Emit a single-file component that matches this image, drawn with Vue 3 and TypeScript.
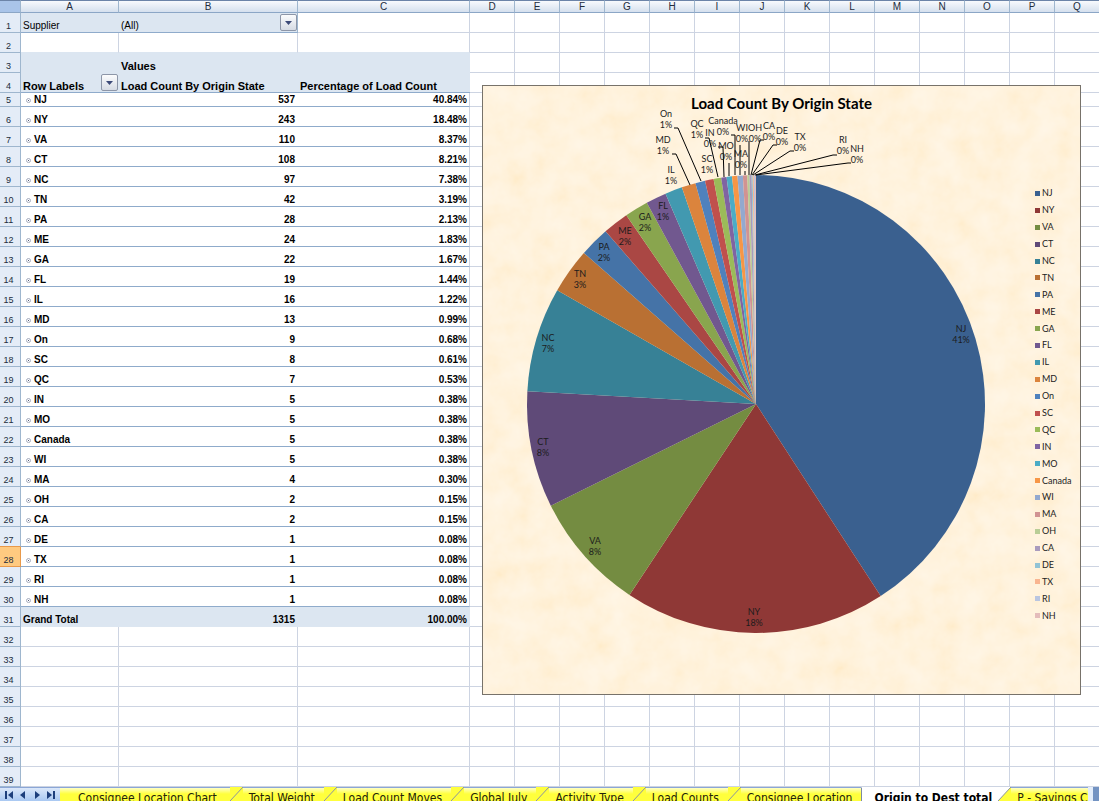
<script setup lang="ts">
interface State {
  name: string
  count: number
  color: string
  x: number
  y: number
  leader?: string
}

const states: State[] = [
  { name: 'NJ', count: 537, color: '#3a608f', x: 478, y: 218 },
  { name: 'NY', count: 243, color: '#8f3836', x: 271, y: 501 },
  { name: 'VA', count: 110, color: '#748c41', x: 112, y: 430 },
  { name: 'CT', count: 108, color: '#5f4a78', x: 60, y: 331 },
  { name: 'NC', count: 97, color: '#378196', x: 65, y: 227 },
  { name: 'TN', count: 42, color: '#b97033', x: 97, y: 163 },
  { name: 'PA', count: 28, color: '#4573a7', x: 121, y: 136 },
  { name: 'ME', count: 24, color: '#aa4744', x: 142, y: 120 },
  { name: 'GA', count: 22, color: '#89a54e', x: 162, y: 106 },
  { name: 'FL', count: 19, color: '#71588f', x: 180, y: 95 },
  { name: 'IL', count: 16, color: '#4299b0', x: 188, y: 59 },
  { name: 'MD', count: 13, color: '#db843d', x: 180, y: 29, leader: '189,40 193,40 207,71' },
  { name: 'On', count: 9, color: '#4f81bd', x: 183, y: 3, leader: '191,14 195,14 218,67' },
  { name: 'SC', count: 8, color: '#c0504d', x: 224, y: 48 },
  { name: 'QC', count: 7, color: '#9bbb59', x: 214, y: 13, leader: '222,24 226,24 235,63' },
  { name: 'IN', count: 5, color: '#8064a2', x: 227, y: 22, leader: '235,33 240,33 241,63' },
  { name: 'MO', count: 5, color: '#4bacc6', x: 243, y: 35, leader: '246,49 246,62' },
  { name: 'Canada', count: 5, color: '#f79646', x: 240, y: 10, leader: '248,21 252,21 252,61' },
  { name: 'WI', count: 5, color: '#93a9cf', x: 259, y: 17, leader: '257,31 257,61' },
  { name: 'MA', count: 4, color: '#d19392', x: 258, y: 43, leader: '262,57 262,61' },
  { name: 'OH', count: 2, color: '#b9cd96', x: 272, y: 17, leader: '266,27 266,61' },
  { name: 'CA', count: 2, color: '#a99bbd', x: 286, y: 15, leader: '281,26 277,26 268,61' },
  { name: 'DE', count: 1, color: '#91c3d5', x: 299, y: 20, leader: '294,31 290,31 269,61' },
  { name: 'TX', count: 1, color: '#f9b590', x: 317, y: 26, leader: '311,37 307,37 270,61' },
  { name: 'RI', count: 1, color: '#b9c5e0', x: 360, y: 29, leader: '354,41 350,41 272,61' },
  { name: 'NH', count: 1, color: '#e4bcbb', x: 374, y: 38, leader: '368,49 365,49 273,61' },
]

const total = states.reduce((sum, s) => sum + s.count, 0)
const percent = (n: number, digits: number) => ((n / total) * 100).toFixed(digits) + '%'

const cx = 273
const cy = 290
const radius = 229
const point = (n: number) => {
  const a = (n / total) * Math.PI * 2
  return `${cx + radius * Math.sin(a)} ${cy - radius * Math.cos(a)}`
}
let running = 0
const slices = states.map((s) => {
  const start = running
  running += s.count
  return {
    ...s,
    path: `M${cx} ${cy} L${point(start)} A${radius} ${radius} 0 0 1 ${point(running)} Z`,
  }
})

const otherColumns = 'DEFGHIJKLMNOPQ'.split('')
const lastRows = [32, 33, 34, 35, 36, 37, 38, 39]
const selectedRow = 28

const tabs = [
  'Consignee Location Chart',
  'Total Weight',
  'Load Count Moves',
  'Global July',
  'Activity Type',
  'Load Counts',
  'Consignee Location',
  'Origin to Dest total',
  'P - Savings Chart',
]
const activeTab = 'Origin to Dest total'
const navs = [
  { label: 'First sheet', d: 'M1 1h2v8H1zM9 1v8L4 5z' },
  { label: 'Previous sheet', d: 'M7 1v8L2 5z' },
  { label: 'Next sheet', d: 'M3 1v8l5-4z' },
  { label: 'Last sheet', d: 'M1 1v8l5-4zM7 1h2v8H7z' },
]
</script>

<template>
  <main class="workbook">
    <div class="sheet">
      <table class="cells">
        <colgroup>
          <col class="w-head" />
          <col class="w-a" />
          <col class="w-b" />
          <col class="w-c" />
          <col v-for="c in otherColumns" :key="c" />
        </colgroup>
        <thead>
          <tr>
            <th class="corner"></th>
            <th>A</th>
            <th>B</th>
            <th>C</th>
            <th v-for="c in otherColumns" :key="c">{{ c }}</th>
          </tr>
        </thead>
        <tbody>
          <tr>
            <th>1</th>
            <td class="fill ruled plain">Supplier</td>
            <td class="fill ruled plain edge">
              <div class="with-button">
                <span>(All)</span>
                <button class="drop" aria-label="Filter supplier">
                  <svg width="7" height="4" viewBox="0 0 7 4"><path d="M0 0h7L3.5 4z" fill="#3c4a78" /></svg>
                </button>
              </div>
            </td>
            <td></td>
            <td v-for="c in otherColumns" :key="c"></td>
          </tr>
          <tr>
            <th>2</th>
            <td class="open"></td>
            <td class="open"></td>
            <td class="open"></td>
            <td v-for="c in otherColumns" :key="c"></td>
          </tr>
          <tr>
            <th>3</th>
            <td class="fill"></td>
            <td class="fill title">Values</td>
            <td class="fill"></td>
            <td v-for="c in otherColumns" :key="c"></td>
          </tr>
          <tr>
            <th>4</th>
            <td class="fill ruled title">
              <div class="with-button">
                <span>Row Labels</span>
                <button class="drop" aria-label="Filter row labels">
                  <svg width="7" height="4" viewBox="0 0 7 4"><path d="M0 0h7L3.5 4z" fill="#3c4a78" /></svg>
                </button>
              </div>
            </td>
            <td class="fill ruled title">Load Count By Origin State</td>
            <td class="fill ruled title">Percentage of Load Count</td>
            <td v-for="c in otherColumns" :key="c"></td>
          </tr>
          <tr v-for="(s, i) in states" :key="s.name" :class="{ short: i === 0 }">
            <th :class="{ selected: i + 5 === selectedRow, above: i + 6 === selectedRow }">{{ i + 5 }}</th>
            <td class="ruled bare">
              <div class="item">
                <button class="expand" :aria-label="'Expand ' + s.name">
                  <svg width="5" height="5" viewBox="0 0 5 5">
                    <circle cx="2.5" cy="2.5" r="2" fill="#fff" stroke="#a4abbd" />
                    <path d="M2 2h1v1H2z" fill="#59627c" />
                  </svg>
                </button>
                <span>{{ s.name }}</span>
              </div>
            </td>
            <td class="ruled bare number">{{ s.count }}</td>
            <td class="ruled number">{{ percent(s.count, 2) }}</td>
            <td v-for="c in otherColumns" :key="c"></td>
          </tr>
          <tr>
            <th>31</th>
            <td class="fill">Grand Total</td>
            <td class="fill number">{{ total }}</td>
            <td class="fill number">100.00%</td>
            <td v-for="c in otherColumns" :key="c"></td>
          </tr>
          <tr v-for="r in lastRows" :key="r">
            <th>{{ r }}</th>
            <td></td>
            <td></td>
            <td></td>
            <td v-for="c in otherColumns" :key="c"></td>
          </tr>
        </tbody>
      </table>

      <figure class="chart">
        <svg class="paper" aria-hidden="true">
          <filter id="parchment" x="0" y="0" width="100%" height="100%">
            <feTurbulence type="fractalNoise" baseFrequency="0.04" numOctaves="4" seed="8" />
            <feColorMatrix values="0 0 0 0 1  0.06 0 0 0 0.906  0.17 0 0 0 0.74  0 0 0 0 1" color-interpolation-filters="sRGB" />
          </filter>
          <rect width="100%" height="100%" filter="url(#parchment)" />
        </svg>
        <figcaption>Load Count By Origin State</figcaption>
        <svg class="pie" viewBox="0 0 552 580" role="img" aria-label="Load count by origin state">
          <path v-for="s in slices" :key="s.name" :d="s.path" :fill="s.color" />
          <g fill="none" stroke="#000">
            <template v-for="s in states" :key="s.name">
              <polyline v-if="s.leader" :points="s.leader" />
            </template>
          </g>
          <g class="labels">
            <text v-for="s in states" :key="s.name" :y="s.y">
              <tspan :x="s.x">{{ s.name }}</tspan>
              <tspan :x="s.x" dy="11">{{ percent(s.count, 0) }}</tspan>
            </text>
          </g>
        </svg>
        <ul class="legend">
          <li v-for="s in states" :key="s.name">
            <i :style="{ background: s.color }"></i>{{ s.name }}
          </li>
        </ul>
      </figure>
    </div>

    <footer class="strip">
      <div class="navs">
        <button v-for="n in navs" :key="n.label" :aria-label="n.label">
          <svg width="10" height="10" viewBox="0 0 10 10"><path :d="n.d" fill="#1d3f7c" /></svg>
        </button>
      </div>
      <nav class="tabs">
        <template v-for="(t, i) in tabs" :key="t">
          <svg v-if="i > 0 && t !== activeTab" class="slant" :class="{ lit: tabs[i - 1] === activeTab }" viewBox="0 0 13 14">
            <path d="M13 0v14H0z" fill="#ffff3c" />
            <path d="M0 14L13 0" fill="none" stroke="#8a93a0" />
          </svg>
          <button class="tab" :class="{ active: t === activeTab }">{{ t }}</button>
        </template>
      </nav>
      <div class="splitter"></div>
    </footer>
  </main>
</template>

<style>
body {
  margin: 0;
  background: #fff;
}
</style>

<style scoped>
.workbook {
  display: flex;
  flex-direction: column;
  height: 100vh;
  overflow: hidden;
  font: 10px/12px 'Liberation Sans', Arial, sans-serif;
  color: #000;
}
button {
  margin: 0;
  padding: 0;
  border: 0;
  background: none;
  font: inherit;
  color: inherit;
}
svg {
  display: block;
}
.sheet {
  position: relative;
  flex: 1;
  min-height: 0;
  overflow: hidden;
}
.cells {
  width: calc(100% + 1px);
  table-layout: fixed;
  border-collapse: separate;
  border-spacing: 0;
}
.w-head {
  width: 21px;
}
.w-a {
  width: 98px;
}
.w-b {
  width: 179px;
}
.w-c {
  width: 172px;
}
th,
td {
  box-sizing: border-box;
  height: 20px;
  padding: 0 2px;
  border: 0 solid #cdd4e2;
  border-width: 0 1px 1px 0;
  vertical-align: bottom;
  white-space: nowrap;
  font-weight: bold;
}
td {
  text-align: left;
}
thead th {
  height: 13px;
  padding: 0;
  border-top: 1px solid #6c84a8;
  border-color: #6c84a8 #9eb6ce #8ba6c6;
  background: linear-gradient(#f8fafd, #d5e0ee);
  line-height: 11px;
  font-weight: normal;
  color: #222c3c;
}
thead .corner {
  background: #a9c4e9;
}
tbody th {
  padding: 0 3px 0 0;
  border-color: #9eb6ce;
  background: #e4ecf7;
  font-size: 9px;
  font-weight: normal;
  color: #222c3c;
}
tbody th.selected {
  background: #ffca80;
  border-color: #e8994a;
}
tbody th.above {
  border-bottom-color: #e8994a;
}
.short th,
.short td {
  height: 14px;
}
.ruled {
  border-bottom-color: #8fabcb;
}
.bare,
.fill {
  border-right-width: 0;
  padding-right: 3px;
}
.open {
  border-bottom-color: #dce6f1;
}
.fill {
  background: #dce6f1;
}
.fill:not(.ruled) {
  border-bottom-color: #dce6f1;
}
.plain {
  font-family: 'Liberation Sans Narrow', 'Liberation Sans', sans-serif;
  font-size: 10px;
  font-weight: normal;
}
.title {
  font-size: 11px;
}
.edge {
  border-right: 1px solid #9eb6ce;
  padding-right: 2px;
}
.number {
  text-align: right;
}
.with-button {
  display: flex;
  justify-content: space-between;
  align-items: flex-end;
  margin-right: -2px;
}
.drop {
  display: flex;
  align-items: center;
  justify-content: center;
  box-sizing: border-box;
  width: 17px;
  height: 17px;
  margin-bottom: 1px;
  border: 1px solid #8d96a8;
  border-radius: 2px;
  background: linear-gradient(#fbfcfd, #d6dbe4);
}
.item {
  display: flex;
  align-items: center;
  gap: 3px;
  padding-left: 3px;
}
.chart {
  position: absolute;
  top: 85px;
  left: 482px;
  right: 18px;
  box-sizing: border-box;
  display: grid;
  grid-template: 28px 580px / 1fr 45px;
  margin: 0;
  border: 1px solid #77726a;
  background: #fff0d4;
  font-family: Lato, Carlito, sans-serif;
}
.paper {
  position: absolute;
  width: 100%;
  height: 100%;
}
figcaption {
  position: relative;
  grid-column: 1 / 3;
  padding-top: 6px;
  text-align: center;
  font-size: 15px;
  line-height: 22px;
  font-weight: bold;
}
.pie {
  position: relative;
  width: 100%;
  height: 580px;
  overflow: visible;
}
.labels {
  font-size: 9px;
  text-anchor: middle;
  fill: #1c1c1c;
}
.legend {
  position: relative;
  display: flex;
  flex-direction: column;
  height: 439px;
  margin: 71px 0 0;
  padding: 0;
  list-style: none;
  font-size: 9px;
  color: #222;
}
.legend li {
  flex: 1;
  display: flex;
  align-items: center;
  gap: 2px;
}
.legend i {
  width: 5px;
  height: 5px;
}
.strip {
  flex: 0 0 14px;
  display: flex;
  overflow: hidden;
  background: #fff;
}
.navs {
  flex: 0 0 60px;
  box-sizing: border-box;
  display: flex;
  align-items: center;
  justify-content: space-evenly;
  border-top: 1px solid #8ba6d6;
  background: linear-gradient(#dbe8fa, #a9c8f2);
}
.tabs {
  flex: 1;
  min-width: 0;
  display: flex;
  overflow: hidden;
  font: 12px/18px 'DejaVu Sans Condensed', 'DejaVu Sans', sans-serif;
}
.tab {
  flex: none;
  height: 20px;
  padding: 0 9px 0 6px;
  border-top: 1px solid #8ba6d6;
  background: linear-gradient(#ffffc8, #ffff3c 6px);
  white-space: nowrap;
  color: #22220a;
}
.tab:first-child {
  padding: 0 13px 0 18px;
}
.tab.active {
  padding: 0 6px 0 12px;
  border-left: 1px solid #7d8ba0;
  border-top-color: #fff;
  background: #fff;
  font-weight: bold;
  color: #000;
}
.slant {
  flex: none;
  width: 13px;
  height: 14px;
  background: #ffff3c;
}
.slant.lit {
  background: #fff;
}
.splitter {
  flex: 0 0 6px;
  border-left: 5px solid #e3edfa;
  background: #7393c2;
}
</style>
